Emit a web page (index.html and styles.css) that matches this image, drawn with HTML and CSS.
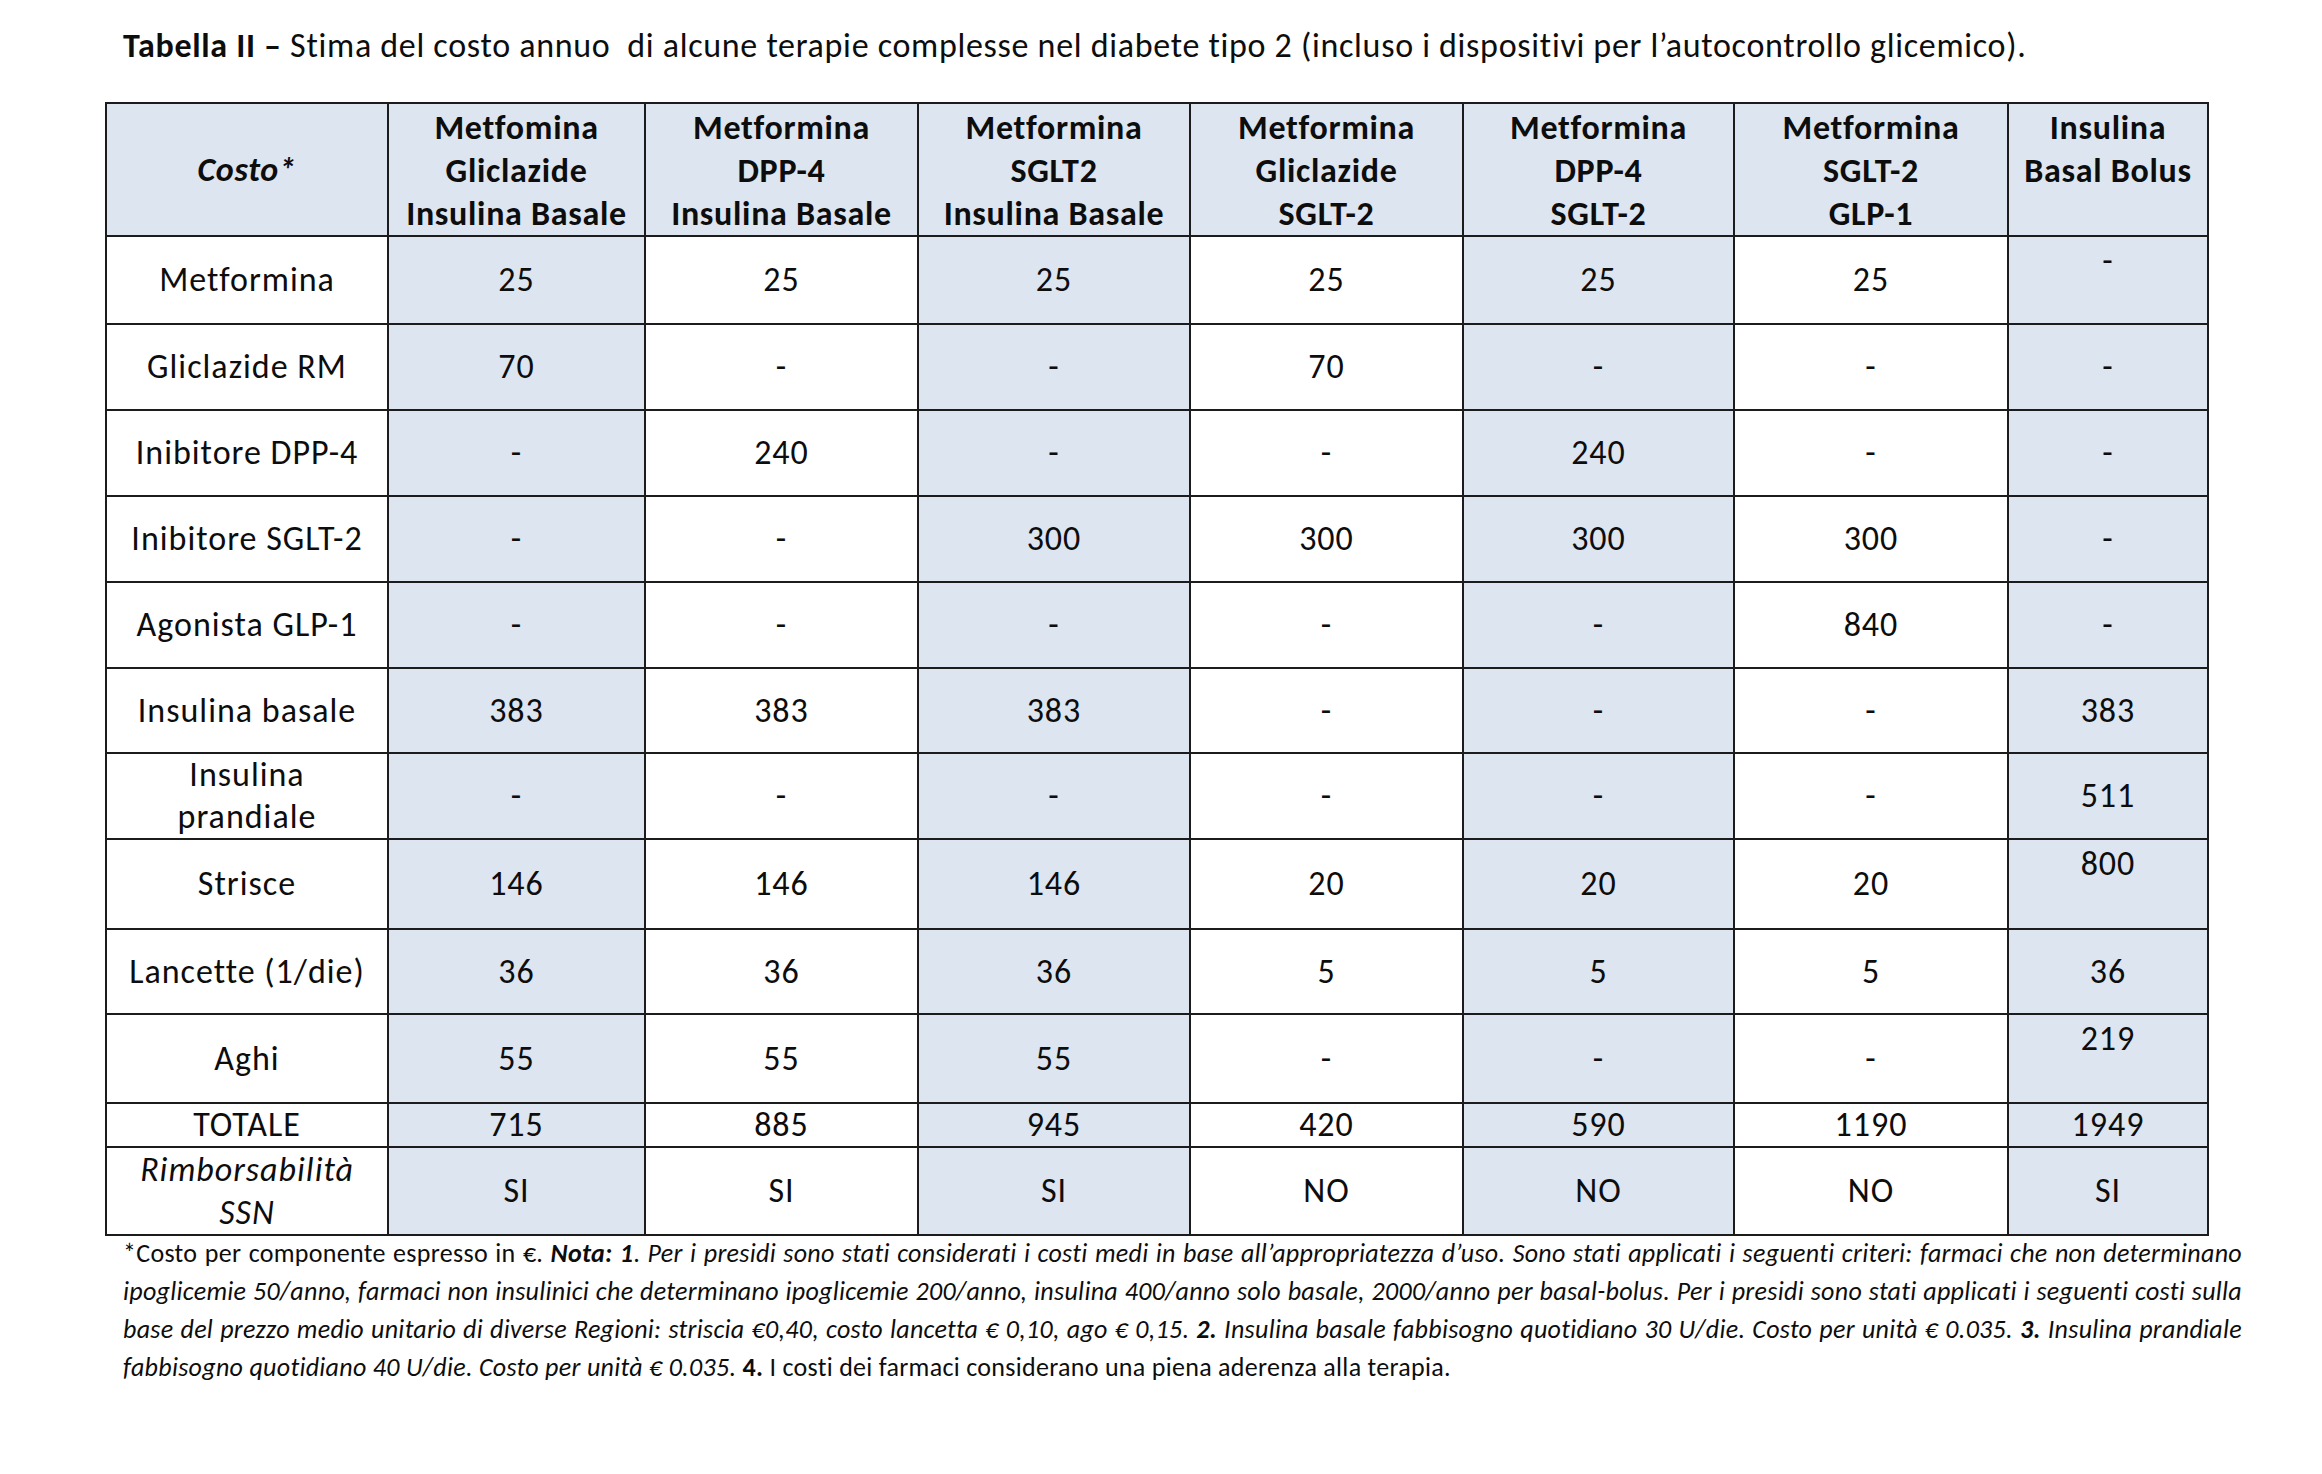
FILE: index.html
```html
<!DOCTYPE html>
<html lang="it">
<head>
<meta charset="utf-8">
<title>Tabella II</title>
<link rel="stylesheet" href="styles.css">
</head>
<body>
<div class="page">
  <p class="title"><b>Tabella II –</b> Stima del costo annuo&nbsp; di alcune terapie complesse nel diabete tipo 2 (incluso i dispositivi per l’autocontrollo glicemico).</p>

  <table class="cost">
    <colgroup>
      <col class="w0"><col class="w1"><col class="w2"><col class="w3"><col class="w4"><col class="w5"><col class="w6"><col class="w7">
    </colgroup>
    <thead>
      <tr class="r-head">
        <th class="costo">Costo*</th>
        <th>Metfomina<br>Gliclazide<br>Insulina Basale</th>
        <th>Metformina<br>DPP-4<br>Insulina Basale</th>
        <th>Metformina<br>SGLT2<br>Insulina Basale</th>
        <th>Metformina<br>Gliclazide<br>SGLT-2</th>
        <th>Metformina<br>DPP-4<br>SGLT-2</th>
        <th>Metformina<br>SGLT-2<br>GLP-1</th>
        <th>Insulina<br>Basal Bolus</th>
      </tr>
    </thead>
    <tbody>
      <tr class="r1">
        <td>Metformina</td><td>25</td><td>25</td><td>25</td><td>25</td><td>25</td><td>25</td><td class="top">-</td>
      </tr>
      <tr class="r2">
        <td>Gliclazide RM</td><td>70</td><td>-</td><td>-</td><td>70</td><td>-</td><td>-</td><td>-</td>
      </tr>
      <tr class="r3">
        <td>Inibitore DPP-4</td><td>-</td><td>240</td><td>-</td><td>-</td><td>240</td><td>-</td><td>-</td>
      </tr>
      <tr class="r4">
        <td>Inibitore SGLT-2</td><td>-</td><td>-</td><td>300</td><td>300</td><td>300</td><td>300</td><td>-</td>
      </tr>
      <tr class="r5">
        <td>Agonista GLP-1</td><td>-</td><td>-</td><td>-</td><td>-</td><td>-</td><td>840</td><td>-</td>
      </tr>
      <tr class="r6">
        <td>Insulina basale</td><td>383</td><td>383</td><td>383</td><td>-</td><td>-</td><td>-</td><td>383</td>
      </tr>
      <tr class="r7">
        <td class="two">Insulina<br>prandiale</td><td>-</td><td>-</td><td>-</td><td>-</td><td>-</td><td>-</td><td>511</td>
      </tr>
      <tr class="r8">
        <td>Strisce</td><td>146</td><td>146</td><td>146</td><td>20</td><td>20</td><td>20</td><td class="top">800</td>
      </tr>
      <tr class="r9">
        <td>Lancette (1/die)</td><td>36</td><td>36</td><td>36</td><td>5</td><td>5</td><td>5</td><td>36</td>
      </tr>
      <tr class="r10">
        <td>Aghi</td><td>55</td><td>55</td><td>55</td><td>-</td><td>-</td><td>-</td><td class="top">219</td>
      </tr>
      <tr class="r11">
        <td>TOTALE</td><td>715</td><td>885</td><td>945</td><td>420</td><td>590</td><td>1190</td><td>1949</td>
      </tr>
      <tr class="r12">
        <td class="two ital">Rimborsabilità<br>SSN</td><td>SI</td><td>SI</td><td>SI</td><td>NO</td><td>NO</td><td>NO</td><td>SI</td>
      </tr>
    </tbody>
  </table>

  <div class="notes">
    <p class="line just">*Costo per componente espresso in €. <b><i>Nota: 1</i></b>. <i>Per i presidi sono stati considerati i costi medi in base all’appropriatezza d’uso. Sono stati applicati i seguenti criteri: farmaci che non determinano</i></p>
    <p class="line just"><i>ipoglicemie 50/anno, farmaci non insulinici che determinano ipoglicemie 200/anno, insulina 400/anno solo basale, 2000/anno per basal-bolus. Per i presidi sono stati applicati i seguenti costi sulla</i></p>
    <p class="line just"><i>base del prezzo medio unitario di diverse Regioni: striscia €0,40, costo lancetta € 0,10, ago € 0,15. <b>2.</b> Insulina basale fabbisogno quotidiano 30 U/die. Costo per unità € 0.035. <b>3.</b> Insulina prandiale</i></p>
    <p class="line"><i>fabbisogno quotidiano 40 U/die. Costo per unità € 0.035. </i><b>4.</b> I costi dei farmaci considerano una piena aderenza alla terapia.</p>
  </div>
</div>
</body>
</html>
```

FILE: styles.css
```css
html, body {
  margin: 0;
  padding: 0;
  background: #ffffff;
}

body {
  font-family: "Carlito", "Calibri", "Lato", sans-serif;
  color: #0d0d0d;
}

.page {
  padding: 26px 0 0 105px;
}

.title {
  margin: 0 0 0 18px;
  font-size: 34px;
  letter-spacing: 0.7px;
  line-height: 40px;
  white-space: nowrap;
}

.cost {
  margin-top: 36px;
  border-collapse: collapse;
  table-layout: fixed;
  width: 2102px;
  font-size: 34px;
  letter-spacing: 1px;
}

.w0 { width: 282px; }
.w1 { width: 257px; }
.w2 { width: 273px; }
.w3 { width: 272px; }
.w4 { width: 273px; }
.w5 { width: 271px; }
.w6 { width: 274px; }
.w7 { width: 200px; }

.cost th,
.cost td {
  border: 2px solid #1c1c1c;
  padding: 0 2px;
  text-align: center;
  vertical-align: middle;
  line-height: 44px;
}

.cost th {
  background: #dce5f0;
  font-weight: bold;
  vertical-align: top;
  padding-top: 2px;
  line-height: 43px;
  letter-spacing: 0.7px;
}

.cost th.costo {
  vertical-align: middle;
  font-style: italic;
  padding-top: 0;
}

.cost td:nth-child(even) {
  background: #dce5f0;
}

.cost td.top {
  vertical-align: top;
  padding-top: 2px;
}

.cost td.two {
  line-height: 42px;
}

.cost td.ital {
  font-style: italic;
  line-height: 43px;
}

.r-head { height: 131px; }
.r1 { height: 88px; }
.r2 { height: 86px; }
.r3 { height: 86px; }
.r4 { height: 86px; }
.r5 { height: 86px; }
.r6 { height: 85px; }
.r7 { height: 85px; }
.r8 { height: 90px; }
.r9 { height: 85px; }
.r10 { height: 89px; }
.r11 { height: 44px; }
.r11 td { line-height: 38px; }
.r12 { height: 87px; }

.notes {
  width: 2119px;
  margin: -2px 0 0 18px;
  font-size: 26px;
  letter-spacing: 0.3px;
  line-height: 38px;
}

.line {
  margin: 0;
  white-space: nowrap;
}

.line.just {
  white-space: normal;
  text-align: justify;
  text-align-last: justify;
}
```
